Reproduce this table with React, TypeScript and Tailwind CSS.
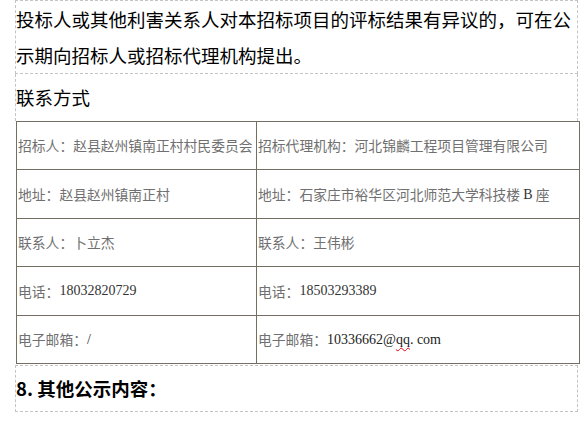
const rows: [string, string, string, string][] = [
  ['招标人：', '赵县赵州镇南正村村民委员会', '招标代理机构：', '河北锦麟工程项目管理有限公司'],
  ['地址：', '赵县赵州镇南正村', '地址：', '石家庄市裕华区河北师范大学科技楼 B 座'],
  ['联系人：', '卜立杰', '联系人：', '王伟彬'],
  ['电话：', '18032820729', '电话：', '18503293389'],
  ['电子邮箱：', '/', '电子邮箱：', ''],
];

function Value({ text }: { text: string }) {
  // latin parts are set in a serif face like the original document
  const parts = text.split(/([A-Za-z0-9./@]+)/).filter(Boolean);
  return (
    <>
      {parts.map((p, i) =>
        /^[A-Za-z0-9./@]+$/.test(p) ? (
          <span key={i} className="font-['Liberation_Serif',serif] text-[#333] text-[14px]">{p}</span>
        ) : (
          <span key={i} className="whitespace-pre">{p}</span>
        )
      )}
    </>
  );
}

export default function App() {
  return (
    <div className="w-[587px] h-[425px] overflow-hidden bg-white font-['Noto_Sans_CJK_SC',sans-serif]">
      <div className="ml-[15px] w-[563px]">
        {/* notice paragraph */}
        <div className="border border-dashed border-[#c4c4c4] text-[18.5px] leading-[36px] text-black">
          投标人或其他利害关系人对本招标项目的评标结果有异议的，可在公示期向招标人或招标代理机构提出。
        </div>

        {/* contact heading */}
        <div className="h-[47px] border-x border-dashed border-[#c4c4c4] flex items-center text-[18.5px] text-black">
          联系方式
        </div>

        {/* contact table */}
        <div className="ml-px w-[564px] border border-[#736f62] grid grid-cols-[240px_1fr] text-[13.8px] text-[#707070]">
          {rows.map((r, i) => {
            const last = i === rows.length - 1;
            return (
              <div key={i} className="contents">
                <div className={`flex items-center pl-px whitespace-nowrap border-r border-[#736f62] ${last ? 'h-[47.4px]' : 'h-[48.4px] border-b'}`}>
                  <span>{r[0]}</span>
                  <Value text={r[1]} />
                </div>
                <div className={`flex items-center pl-px whitespace-nowrap border-[#736f62] ${last ? 'h-[47.4px]' : 'h-[48.4px] border-b'}`}>
                  <span>{r[2]}</span>
                  {last ? (
                    <span className="font-['Liberation_Serif',serif] text-[14px] text-[#222]">
                      10336662@<span className="underline decoration-wavy decoration-red-600 decoration-1 underline-offset-[3px]">qq</span>. com
                    </span>
                  ) : (
                    <Value text={r[3]} />
                  )}
                </div>
              </div>
            );
          })}
        </div>

        {/* next section */}
        <div className="mt-px h-[47px] border border-dashed border-[#c4c4c4] flex items-center text-[18.5px] font-bold text-black">
          8. 其他公示内容：
        </div>
      </div>
    </div>
  );
}
